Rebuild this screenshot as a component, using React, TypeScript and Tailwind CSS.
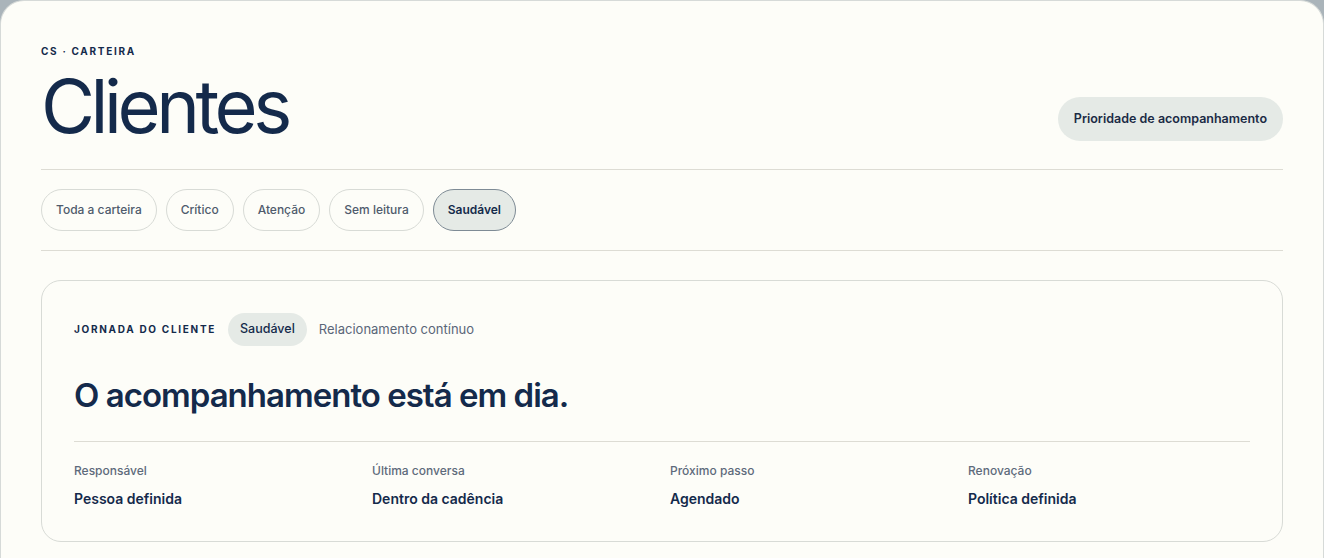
import React from 'react'

const filters = ['Toda a carteira', 'Crítico', 'Atenção', 'Sem leitura', 'Saudável']

const facts = [
  { label: 'Responsável', value: 'Pessoa definida' },
  { label: 'Última conversa', value: 'Dentro da cadência' },
  { label: 'Próximo passo', value: 'Agendado' },
  { label: 'Renovação', value: 'Política definida' },
]

const App = () => {
  const active = 'Saudável'

  return (
    <div className="min-h-screen bg-[#aab4ba] font-['Inter',sans-serif] text-[#142a4b]">
      <div className="min-h-[558px] rounded-t-[24px] border-t border-x border-[#d6dad8] bg-[#fdfdf8] px-10 pt-[42px] pb-4">
        <div className="flex items-end justify-between">
          <div className="flex flex-col">
            <span className="text-[10px] leading-4 font-bold tracking-[0.17em]">CS · CARTEIRA</span>
            <h1 className="mt-[10px] text-[74px] leading-none font-normal tracking-[-0.06em]">Clientes</h1>
          </div>
          <button className="mb-[2px] h-11 rounded-full bg-[#e5eae6] px-4 text-[12.5px] font-semibold text-[#1b2b45]">
            Prioridade de acompanhamento
          </button>
        </div>

        <div className="mt-[26px] border-t border-[#dddcd4]" />

        <div className="mt-[19px] flex gap-[9px]">
          {filters.map((f) => (
            <button
              key={f}
              className={
                f === active
                  ? 'h-[42px] rounded-full border border-[#7e8b95] bg-[#e5eae6] px-[14px] text-[12px] font-semibold text-[#142a4b]'
                  : 'h-[42px] rounded-full border border-[#d8dbd6] px-[14px] text-[12px] font-medium text-[#4f5b6c]'
              }
            >
              {f}
            </button>
          ))}
        </div>

        <div className="mt-[19px] border-t border-[#dddcd4]" />

        <div className="mt-[29px] rounded-[20px] border border-[#d8dbd6] px-8 pt-8 pb-8">
          <div className="flex items-center gap-3">
            <span className="text-[10px] font-bold tracking-[0.17em]">JORNADA DO CLIENTE</span>
            <span className="flex h-[33px] items-center rounded-full bg-[#e5eae6] px-3 text-[12.5px] font-medium">
              Saudável
            </span>
            <span className="text-[13px] text-[#5a6678]">Relacionamento contínuo</span>
          </div>

          <h2 className="mt-[29px] text-[33px] leading-10 font-semibold tracking-[-0.03em]">
            O acompanhamento está em dia.
          </h2>

          <div className="mt-[26px] border-t border-[#dddcd4]" />

          <div className="mt-[21px] grid grid-cols-4 gap-4">
            {facts.map((f) => (
              <div key={f.label} className="flex flex-col">
                <span className="text-[12px] leading-4 font-medium text-[#5d6a7b]">{f.label}</span>
                <span className="mt-[10px] text-[14px] leading-5 font-semibold">{f.value}</span>
              </div>
            ))}
          </div>
        </div>
      </div>
    </div>
  )
}

export default App
